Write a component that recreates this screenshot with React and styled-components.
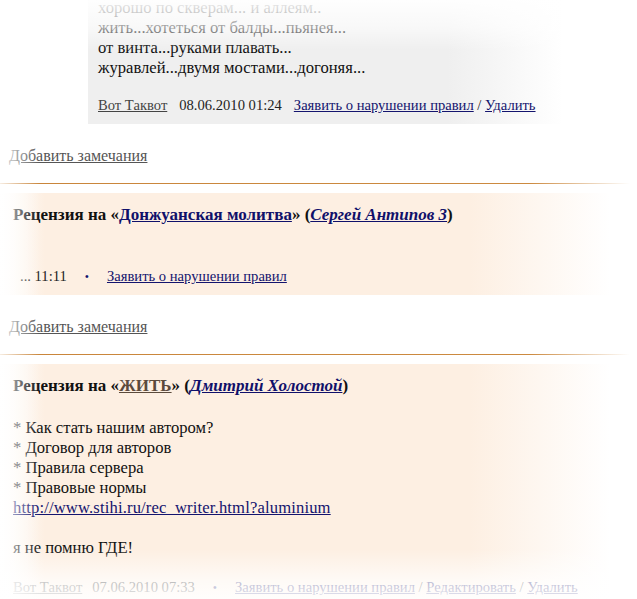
import React from "react";
import styled, { createGlobalStyle } from "styled-components";

const GlobalStyle = createGlobalStyle`
  html, body {
    margin: 0;
    padding: 0;
    overflow: hidden;
    background: #fff;
  }
  body {
    font-family: "Liberation Serif", "Times New Roman", serif;
    font-size: 16.6px;
    line-height: 20px;
    color: #111;
  }
`;

const Page = styled.div`
  position: relative;
  width: 637px;
  height: 599px;
  overflow: hidden;
`;

// white vignette over the edges of the shot
const Fade = styled.div`
  position: absolute;
  inset: 0;
  pointer-events: none;
  background:
    linear-gradient(to bottom, rgba(255, 255, 255, 0.94) 0, rgba(255, 255, 255, 0.6) 27px, rgba(255, 255, 255, 0) 50px),
    linear-gradient(to top, rgba(255, 255, 255, 0.9) 0, rgba(255, 255, 255, 0.7) 18px, rgba(255, 255, 255, 0) 50px),
    linear-gradient(to right, rgba(255, 255, 255, 0.85) 0, rgba(255, 255, 255, 0) 40px);
`;

const CommentBox = styled.div`
  margin: -2px 0 0 88px;
  width: 480px;
  padding: 0 10px 9px;
  box-sizing: border-box;
  background: linear-gradient(to right, #efefef 0, #efefef 360px, #ffffff 475px);
`;

const Line = styled.div`
  white-space: nowrap;
`;

const Meta = styled.div`
  margin-top: ${(p) => p.$gap || 0}px;
  font-size: 14.6px;
  white-space: nowrap;
  color: #222;
`;

const Gap = styled.span`
  display: inline-block;
  width: ${(p) => p.$w}px;
`;

const UserLink = styled.a`
  color: #444;
  text-decoration: underline;
`;

const Link = styled.a`
  color: #14146e;
  text-decoration: underline;
`;

const UrlLink = styled(Link)`
  letter-spacing: 0.15px;
`;

const Dot = styled.span`
  color: #14146e;
  font-size: 12px;
`;

const AddNote = styled.a`
  display: block;
  margin: 22px 0 0 9px;
  width: max-content;
  font-size: 16px;
  color: #555;
  text-decoration: underline;
`;

const Divider = styled.div`
  margin-top: 17px;
  height: 1px;
  background: linear-gradient(to right, #c9853a 0, #cc8a40 530px, rgba(255, 255, 255, 0) 630px);
`;

const Review = styled.div`
  margin-top: 9px;
  padding: 12px 13px 8px;
  background: linear-gradient(
    to right,
    #ffffff 0,
    #fdefe2 45px,
    #fdefe2 470px,
    #ffffff 610px
  );
`;

const ReviewTitle = styled.div`
  font-size: 17px;
  font-weight: bold;
  white-space: nowrap;
  color: #111;
`;

const WorkLink = styled.a`
  color: ${(p) => (p.$visited ? "#5b4a3c" : "#10106a")};
  text-decoration: underline;
`;

const AuthorLink = styled.a`
  color: #10106a;
  font-style: italic;
  text-decoration: underline;
`;

const Body = styled.div`
  margin-top: ${(p) => p.$gap || 0}px;
`;

export default function App() {
  return (
    <>
      <GlobalStyle />
      <Page>
        <CommentBox>
          <Line>хорошо по скверам... и аллеям..</Line>
          <Line>жить...хотеться от балды...пьянея...</Line>
          <Line>от винта...руками плавать...</Line>
          <Line>журавлей...двумя мостами...догоняя...</Line>
          <Meta $gap={17}>
            <UserLink>Вот Таквот</UserLink>
            <Gap $w={12} />
            08.06.2010 01:24
            <Gap $w={12} />
            <Link>Заявить о нарушении правил</Link> / <Link>Удалить</Link>
          </Meta>
        </CommentBox>

        <AddNote>Добавить замечания</AddNote>
        <Divider />

        <Review>
          <ReviewTitle>
            Рецензия на «<WorkLink>Донжуанская молитва</WorkLink>» (
            <AuthorLink>Сергей Антипов 3</AuthorLink>)
          </ReviewTitle>
          <Meta $gap={41}>
            <Gap $w={7} />
            ... 11:11
            <Gap $w={18} />
            <Dot>•</Dot>
            <Gap $w={18} />
            <Link>Заявить о нарушении правил</Link>
          </Meta>
        </Review>

        <AddNote>Добавить замечания</AddNote>
        <Divider />

        <Review>
          <ReviewTitle>
            Рецензия на «<WorkLink $visited>ЖИТЬ</WorkLink>» (
            <AuthorLink>Дмитрий Холостой</AuthorLink>)
          </ReviewTitle>
          <Body $gap={22}>
            <Line>* Как стать нашим автором?</Line>
            <Line>* Договор для авторов</Line>
            <Line>* Правила сервера</Line>
            <Line>* Правовые нормы</Line>
            <Line>
              <UrlLink>http://www.stihi.ru/rec_writer.html?aluminium</UrlLink>
            </Line>
            <Line>&nbsp;</Line>
            <Line>я не помню ГДЕ!</Line>
          </Body>
          <Meta $gap={19}>
            <UserLink>Вот Таквот</UserLink>
            <Gap $w={10} />
            07.06.2010 07:33
            <Gap $w={18} />
            <Dot>•</Dot>
            <Gap $w={18} />
            <Link>Заявить о нарушении правил</Link> /{" "}
            <Link>Редактировать</Link> / <Link>Удалить</Link>
          </Meta>
        </Review>
        <Fade />
      </Page>
    </>
  );
}
